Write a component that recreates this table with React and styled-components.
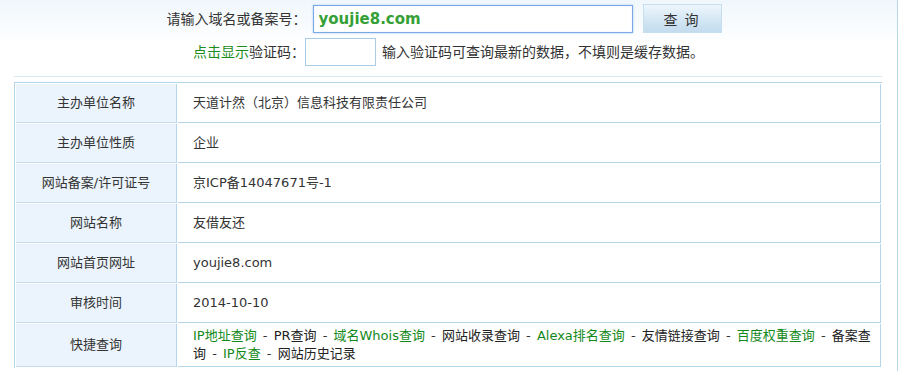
import React from 'react';
import styled, { createGlobalStyle } from 'styled-components';

const GlobalStyle = createGlobalStyle`
  html, body {
    margin: 0;
    padding: 0;
    background: #fff;
  }
  body {
    font-family: "DejaVu Sans", "Noto Sans CJK SC", sans-serif;
    color: #333;
  }
`;

const rows = [
  { label: '主办单位名称', value: '天道计然（北京）信息科技有限责任公司' },
  { label: '主办单位性质', value: '企业' },
  { label: '网站备案/许可证号', value: '京ICP备14047671号-1' },
  { label: '网站名称', value: '友借友还' },
  { label: '网站首页网址', value: 'youjie8.com' },
  { label: '审核时间', value: '2014-10-10' },
];

const links = [
  { text: 'IP地址查询', green: true },
  { text: 'PR查询' },
  { text: '域名Whois查询', green: true },
  { text: '网站收录查询' },
  { text: 'Alexa排名查询', green: true },
  { text: '友情链接查询' },
  { text: '百度权重查询', green: true },
  { text: '备案查询' },
  { text: 'IP反查', green: true },
  { text: '网站历史记录' },
];

const App = () => {
  return (
    <Page>
      <GlobalStyle />
      <SearchForm>
        <FormRow $shift={9}>
          <FormLabel>请输入域名或备案号：</FormLabel>
          <DomainInput defaultValue="youjie8.com" />
          <SubmitButton type="button">查 询</SubmitButton>
        </FormRow>
        <FormRow>
          <FormLabel>
            <GreenText>点击显示</GreenText>验证码：
          </FormLabel>
          <CodeInput />
          <Hint>输入验证码可查询最新的数据，不填则是缓存数据。</Hint>
        </FormRow>
      </SearchForm>
      <Divider />
      <InfoTable>
        {rows.map((row) => (
          <React.Fragment key={row.label}>
            <LabelCell>{row.label}</LabelCell>
            <ValueCell>{row.value}</ValueCell>
          </React.Fragment>
        ))}
        <LabelCell $tall>快捷查询</LabelCell>
        <ValueCell $tall>
          <LinkList>
            {links.map((link, i) => (
              <React.Fragment key={link.text}>
                {i > 0 && <Sep> - </Sep>}
                <QuickLink $green={link.green}>{link.text}</QuickLink>
              </React.Fragment>
            ))}
          </LinkList>
        </ValueCell>
      </InfoTable>
    </Page>
  );
};

const Page = styled.div`
  box-sizing: border-box;
  width: 898px;
  min-height: 371px;
  border-right: 1px solid #b9d7ea;
  background: linear-gradient(to bottom, #f0f7fc 0, #ffffff 45px);
  padding-top: 4px;
`;

const SearchForm = styled.form`
  display: flex;
  flex-direction: column;
  align-items: center;
  gap: 5px;
  padding-bottom: 10px;
`;

const FormRow = styled.div`
  display: flex;
  align-items: center;
  padding-right: ${(p) => p.$shift || 0}px;
  font-size: 14px;
  line-height: 18px;
`;

const FormLabel = styled.span`
  color: #333;
  white-space: nowrap;
`;

const GreenText = styled.span`
  color: #1b8c1b;
`;

const DomainInput = styled.input`
  box-sizing: border-box;
  width: 320px;
  height: 28px;
  margin-left: 6px;
  padding: 0 5px;
  border: 1px solid #7aa9e6;
  box-shadow: 0 0 2px #a9c9f2, inset 0 0 1px #a9c9f2;
  outline: none;
  font-family: "DejaVu Sans", sans-serif;
  font-weight: bold;
  font-size: 15px;
  color: #35a035;
  background: #fff;
`;

const SubmitButton = styled.button`
  box-sizing: border-box;
  width: 79px;
  height: 29px;
  margin-left: 10px;
  border: 1px solid #c6dff0;
  background: linear-gradient(to bottom, #eef6fc 0, #d6e8f5 50%, #c3dcee 100%);
  font-family: "Noto Sans CJK SC", sans-serif;
  font-size: 14px;
  color: #333;
  letter-spacing: 2px;
  padding: 0;
  cursor: pointer;
`;

const CodeInput = styled.input`
  box-sizing: border-box;
  width: 71px;
  height: 28px;
  margin-left: 0;
  border: 1px solid #a9cce6;
  background: #fff;
  outline: none;
`;

const Hint = styled.span`
  margin-left: 6px;
  color: #333;
  white-space: nowrap;
`;

const Divider = styled.div`
  width: 868px;
  height: 1px;
  margin-left: 14px;
  background: #d6e9f6;
`;

const InfoTable = styled.div`
  display: grid;
  grid-template-columns: 161px 703px;
  gap: 1px;
  width: max-content;
  margin: 5px 0 0 14px;
  padding: 1px;
  border-top: 1px solid #b5d5ea;
  border-left: 1px solid #b5d5ea;
  font-size: 13px;
  line-height: 18px;
`;

const LabelCell = styled.div`
  box-sizing: border-box;
  display: flex;
  align-items: center;
  justify-content: center;
  height: ${(p) => (p.$tall ? 43 : 39)}px;
  background: #ebf4fc;
  border-right: 1px solid #b5d5ea;
  border-bottom: 1px solid #c4def0;
  color: #333;
`;

const ValueCell = styled.div`
  box-sizing: border-box;
  display: flex;
  align-items: center;
  height: ${(p) => (p.$tall ? 43 : 39)}px;
  padding: 0 4px 0 15px;
  background: #fff;
  border-right: 1px solid #b5d5ea;
  border-bottom: 1px solid #b5d5ea;
  color: #333;
`;

const LinkList = styled.div`
  line-height: 18px;
  color: #222;
`;

const Sep = styled.span`
  padding: 0 2px;
  color: #333;
`;

const QuickLink = styled.span`
  color: ${(p) => (p.$green ? '#12891a' : '#222')};
`;

export default App;
